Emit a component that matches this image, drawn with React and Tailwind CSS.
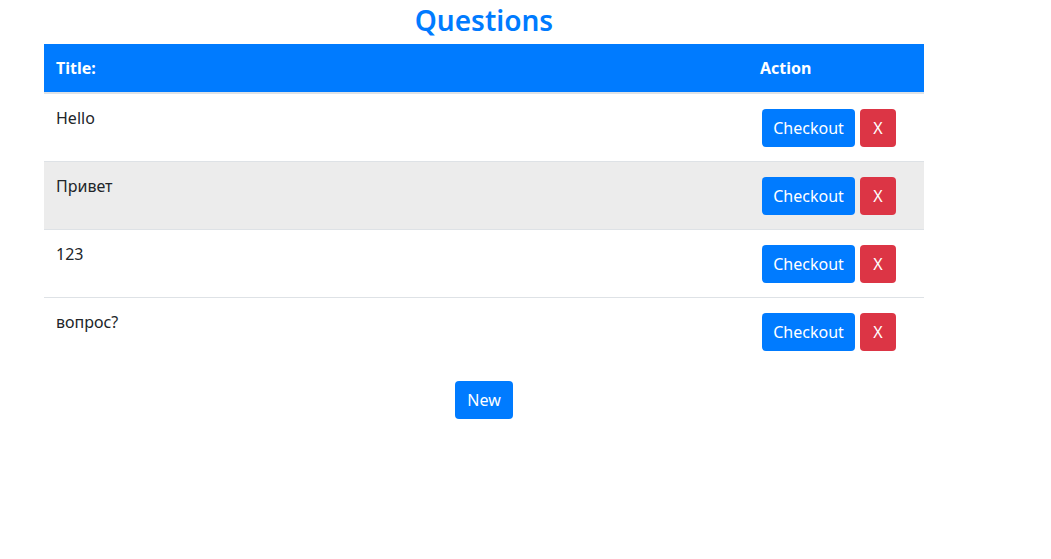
import React from 'react';

const questions = ['Hello', 'Привет', '123', 'вопрос?'];

const App = () => {
  return (
    <div className="min-h-screen bg-white text-[#212529]" style={{ fontFamily: '"Segoe UI", "Noto Sans", sans-serif' }}>
      <div className="ml-[44px] w-[880px]">
        <h1 className="h-[44px] pt-[2px] text-center text-[28px] font-semibold leading-[36px] text-[#007bff]">
          Questions
        </h1>
        <table className="w-full border-collapse text-[16px]">
          <thead>
            <tr className="bg-[#007bff] text-white">
              <th className="h-[49px] border-b-2 border-[#dee2e6] px-3 text-left font-bold">Title:</th>
              <th className="w-[176px] border-b-2 border-[#dee2e6] px-3 text-left font-bold">Action</th>
            </tr>
          </thead>
          <tbody>
            {questions.map((q, i) => (
              <tr key={q} className={i === 1 ? 'bg-[#ececec]' : 'bg-white'}>
                <td className={`px-3 py-3 align-top leading-6 ${i > 0 ? 'border-t border-[#dee2e6]' : ''}`}>{q}</td>
                <td className={`px-3 py-3 align-top ${i > 0 ? 'border-t border-[#dee2e6]' : ''}`}>
                  <div className="mb-[2px] ml-[2px] mt-[3px] flex gap-[5px]">
                    <button className="h-[38px] w-[93px] rounded bg-[#007bff] text-white">Checkout</button>
                    <button className="h-[38px] w-[36px] rounded bg-[#dc3545] text-white">X</button>
                  </div>
                </td>
              </tr>
            ))}
          </tbody>
        </table>
        <div className="mt-[16px] flex justify-center">
          <button className="h-[38px] w-[58px] rounded bg-[#007bff] text-[16px] text-white">New</button>
        </div>
      </div>
    </div>
  );
};

export default App;
